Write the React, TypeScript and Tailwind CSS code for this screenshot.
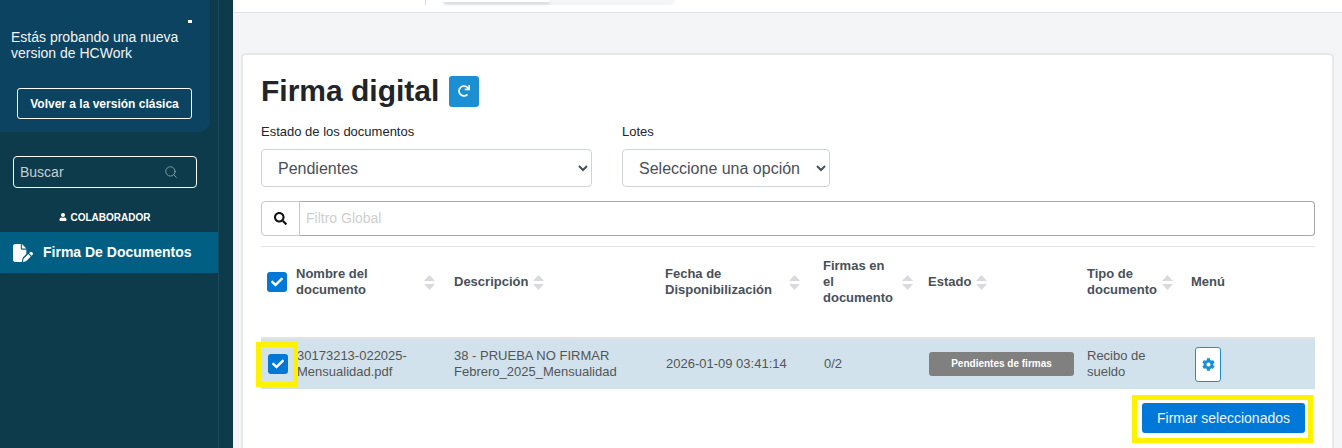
import React from "react";
import { FaCheck, FaCog, FaRedo, FaSearch, FaUser } from "react-icons/fa";
import { FaFilePen } from "react-icons/fa6";
import { Search } from "lucide-react";

const Box = () => (
  <span className="flex h-5 w-5 items-center justify-center rounded-[3px] bg-[#0078d7] text-white">
    <FaCheck className="h-3 w-3" />
  </span>
);

const Sort = () => (
  <svg viewBox="0 0 11 15" className="h-[15px] w-[11px] shrink-0 fill-[#d8dade]">
    <polygon points="5.5,0 11,6 0,6" />
    <polygon points="0,9 11,9 5.5,15" />
  </svg>
);

const Head = ({ label, className = "" }: { label: React.ReactNode; className?: string }) => (
  <div className={`flex items-center gap-[5px] text-[13px] font-bold leading-4 text-[#495057] ${className}`}>
    <span>{label}</span>
    <Sort />
  </div>
);

export default function App() {
  return (
    <div className="flex h-[448px] w-[1342px] overflow-hidden bg-[#f4f5f7] font-['Liberation_Sans',Arial,sans-serif]">
      <aside className="h-full w-[233px] shrink-0 bg-[#0e3b4b] text-white">
        <div className="h-full w-[219px] border-r border-[#1c4a5b]">
          <div className="flex h-[132px] w-[210px] flex-col rounded-br-xl bg-[#0b4360] pl-[11px]">
            <div className="ml-[177px] mt-[20px] h-[3px] w-[4px] bg-white" />
            <p className="mt-[6px] text-[14px] leading-4 text-[#f2f5f7]">
              Estás probando una nueva
              <br />
              version de HCWork
            </p>
            <button className="ml-[6px] mt-[27px] h-[31px] w-[175px] rounded-[3px] border border-white text-[12px] font-bold text-white">
              Volver a la versión clásica
            </button>
          </div>
          <div className="ml-[13px] mt-[24px] flex h-[32px] w-[184px] items-center justify-between rounded-[4px] border border-white pl-[6px] pr-[18px]">
            <span className="text-[14px] text-[#c3ced3]">Buscar</span>
            <Search className="h-[14px] w-[14px] text-[#8fa5ae]" strokeWidth={1.5} />
          </div>
          <div className="mt-[19px] flex h-[20px] items-center justify-center gap-[4px] pr-[9px] text-[10px] font-bold text-white">
            <FaUser className="h-[8px] w-[8px]" />
            COLABORADOR
          </div>
          <div className="mt-[5px] flex h-[41px] items-center gap-[10px] bg-[#005f83] pl-[13px]">
            <FaFilePen className="h-[20px] w-[20px]" />
            <span className="text-[14px] font-bold">Firma De Documentos</span>
          </div>
        </div>
      </aside>

      <main className="flex min-w-0 flex-1 flex-col">
        <header className="flex h-[13px] shrink-0 items-start border-b border-[#e3e3e3] bg-white">
          <div className="ml-[192px] h-[5px] w-px bg-[#d8d8d8]" />
          <div className="ml-[17px] h-[5px] w-[232px] rounded-b-md bg-[#f4f5f7]">
            <div className="h-[2px] w-[107px] rounded-b-md bg-white shadow-[0_2px_3px_#c9ccd1]" />
          </div>
        </header>

        <section className="relative ml-[8px] mt-[40px] h-[400px] w-[1093px] shrink-0 rounded-[5px] border-2 border-b-0 border-[#e8e8e8] bg-white px-[18px]">
          <div className="mt-[18px] flex h-[36px] items-center gap-[10px]">
            <h1 className="text-[30px] font-bold leading-none text-[#212529]">Firma digital</h1>
            <span className="flex h-[31px] w-[30px] items-center justify-center rounded-[3px] bg-[#1c8fd3] text-white">
              <FaRedo className="h-[12px] w-[12px]" />
            </span>
          </div>

          <div className="mt-[16px] flex gap-[30px]">
            <label className="flex w-[331px] flex-col gap-[10px] text-[13px] leading-[14px] text-[#212529]">
              Estado de los documentos
              <select className="h-[38px] rounded-[4px] border border-[#ced4da] bg-white px-3 text-[16px] text-[#495057]">
                <option>Pendientes</option>
              </select>
            </label>
            <label className="flex w-[208px] flex-col gap-[10px] text-[13px] leading-[14px] text-[#212529]">
              Lotes
              <select className="h-[38px] rounded-[4px] border border-[#ced4da] bg-white px-3 text-[16px] text-[#495057]">
                <option>Seleccione una opción</option>
              </select>
            </label>
          </div>

          <div className="mt-[14px] flex h-[35px] w-[1054px]">
            <span className="flex w-[39px] items-center justify-center rounded-l-[4px] border border-[#c8c8c8] text-[#111]">
              <FaSearch className="h-[13px] w-[13px]" />
            </span>
            <span className="flex flex-1 items-center rounded-r-[4px] border border-l-0 border-[#a6a6a6] pl-[6px] text-[14px] text-[#cfcfcf]">
              Filtro Global
            </span>
          </div>

          <div className="mt-[10px] w-[1054px] border-t border-[#e3e3e3]">
            <div className="grid h-[92px] grid-cols-[193px_211px_158px_105px_159px_104px_1fr] border-b-2 border-[#e3e3e3] pb-[20px]">
              <div className="flex items-center">
                <span className="ml-[6px] mr-[9px]">
                  <Box />
                </span>
                <Head className="w-[140px] justify-between pr-[1px]" label={<>Nombre del<br />documento</>} />
              </div>
              <Head label="Descripción" />
              <Head className="w-[135px] justify-between" label={<>Fecha de<br />Disponibilización</>} />
              <Head className="w-[90px] justify-between" label={<>Firmas en<br />el<br />documento</>} />
              <Head label="Estado" />
              <Head label={<>Tipo de<br />documento</>} />
              <Head className="[&>svg]:hidden" label="Menú" />
            </div>

            <div className="grid h-[50px] grid-cols-[193px_211px_158px_105px_159px_104px_1fr] items-center bg-[#d1e2ec] text-[13px] leading-4 text-[#555]">
              <div className="flex items-center">
                <span className="ml-[7px] mr-[9px]">
                  <Box />
                </span>
                <span>
                  30173213-022025-
                  <br />
                  Mensualidad.pdf
                </span>
              </div>
              <span>
                38 - PRUEBA NO FIRMAR
                <br />
                Febrero_2025_Mensualidad
              </span>
              <span className="pl-px">2026-01-09 03:41:14</span>
              <span className="pl-px">0/2</span>
              <span className="ml-[1px] flex h-[24px] w-[145px] items-center justify-center rounded-[3px] bg-[#808080] text-[10px] font-bold text-white">
                Pendientes de firmas
              </span>
              <span>
                Recibo de
                <br />
                sueldo
              </span>
              <span className="ml-[4px] flex h-[35px] w-[26px] items-center justify-center rounded-[3px] border border-[#1c8fd3] bg-white text-[#1c8fd3]">
                <FaCog className="h-[13px] w-[13px]" />
              </span>
            </div>

            <div className="mt-[14px] flex justify-end pr-[10px]">
              <button className="h-[30px] w-[163px] rounded-[3px] bg-[#0078d7] text-[14px] text-[#eef6fc]">
                Firmar seleccionados
              </button>
            </div>
          </div>

          <div className="absolute left-[13px] top-[287px] h-[45px] w-[42px] border-[5px] border-[#fff200]" />
          <div className="absolute left-[889px] top-[340px] h-[48px] w-[181px] border-[5px] border-[#fff200]" />
        </section>
      </main>
    </div>
  );
}
